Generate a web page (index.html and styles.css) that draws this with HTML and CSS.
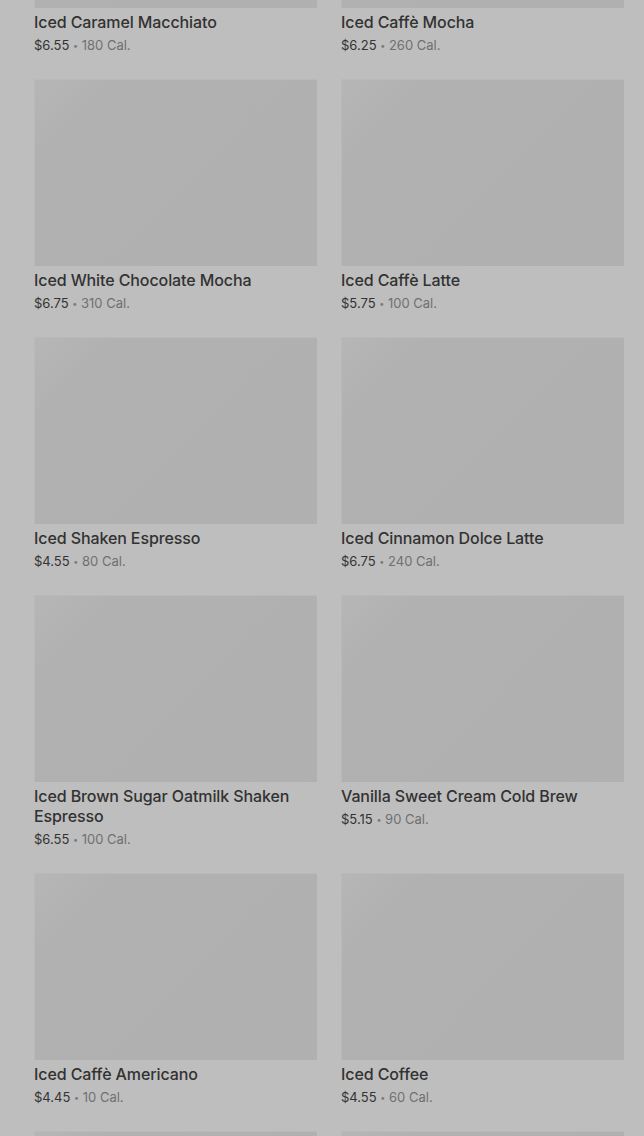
FILE: index.html
```html
<!DOCTYPE html>
<html lang="en">
<head>
<meta charset="utf-8">
<title>Iced Coffees</title>
<link rel="stylesheet" href="styles.css">
</head>
<body>
<main class="menu">
  <div class="grid">
    <div class="card"><div class="thumb"></div><div class="name">Iced Caramel Macchiato</div><div class="meta"><span class="price">$6.55</span> <span class="dot">•</span> 180 Cal.</div></div>
    <div class="card"><div class="thumb"></div><div class="name">Iced Caffè Mocha</div><div class="meta"><span class="price">$6.25</span> <span class="dot">•</span> 260 Cal.</div></div>
    <div class="card"><div class="thumb"></div><div class="name">Iced White Chocolate Mocha</div><div class="meta"><span class="price">$6.75</span> <span class="dot">•</span> 310 Cal.</div></div>
    <div class="card"><div class="thumb"></div><div class="name">Iced Caffè Latte</div><div class="meta"><span class="price">$5.75</span> <span class="dot">•</span> 100 Cal.</div></div>
    <div class="card"><div class="thumb"></div><div class="name">Iced Shaken Espresso</div><div class="meta"><span class="price">$4.55</span> <span class="dot">•</span> 80 Cal.</div></div>
    <div class="card"><div class="thumb"></div><div class="name">Iced Cinnamon Dolce Latte</div><div class="meta"><span class="price">$6.75</span> <span class="dot">•</span> 240 Cal.</div></div>
    <div class="card"><div class="thumb"></div><div class="name">Iced Brown Sugar Oatmilk Shaken Espresso</div><div class="meta"><span class="price">$6.55</span> <span class="dot">•</span> 100 Cal.</div></div>
    <div class="card"><div class="thumb"></div><div class="name">Vanilla Sweet Cream Cold Brew</div><div class="meta"><span class="price">$5.15</span> <span class="dot">•</span> 90 Cal.</div></div>
    <div class="card"><div class="thumb"></div><div class="name">Iced Caffè Americano</div><div class="meta"><span class="price">$4.45</span> <span class="dot">•</span> 10 Cal.</div></div>
    <div class="card"><div class="thumb"></div><div class="name">Iced Coffee</div><div class="meta"><span class="price">$4.55</span> <span class="dot">•</span> 60 Cal.</div></div>
    <div class="card"><div class="thumb"></div></div>
    <div class="card"><div class="thumb"></div></div>
  </div>
</main>
</body>
</html>
```

FILE: styles.css
```css
html, body {
  margin: 0;
  padding: 0;
  background: #bebebe;
  overflow: hidden;
}
body {
  font-family: Inter, "Noto Sans", "Liberation Sans", sans-serif;
  color: #333333;
}
.menu {
  padding: 0 20px 0 34px;
  height: 1136px;
  overflow: hidden;
}
.grid {
  margin-top: -179px;
  display: grid;
  grid-template-columns: 1fr 1fr;
  column-gap: 24px;
  row-gap: 25px;
  align-items: start;
}
.thumb {
  height: 187px;
  background: linear-gradient(135deg, #b6b6b6 0%, #b1b1b1 18%, #b0b0b0 100%);
  box-shadow: inset 1px 1px 0 #b9b9b9;
}
.name {
  margin-top: 4px;
  font-size: 16px;
  line-height: 20px;
  font-weight: 500;
  color: #323232;
  letter-spacing: -0.1px;
}
.meta {
  margin-top: 4px;
  height: 18px;
  font-size: 13px;
  line-height: 18px;
  color: #707070;
}
.price {
  color: #333333;
}
.dot {
  font-size: 9px;
  vertical-align: 1px;
  color: #7a7a7a;
}
```
